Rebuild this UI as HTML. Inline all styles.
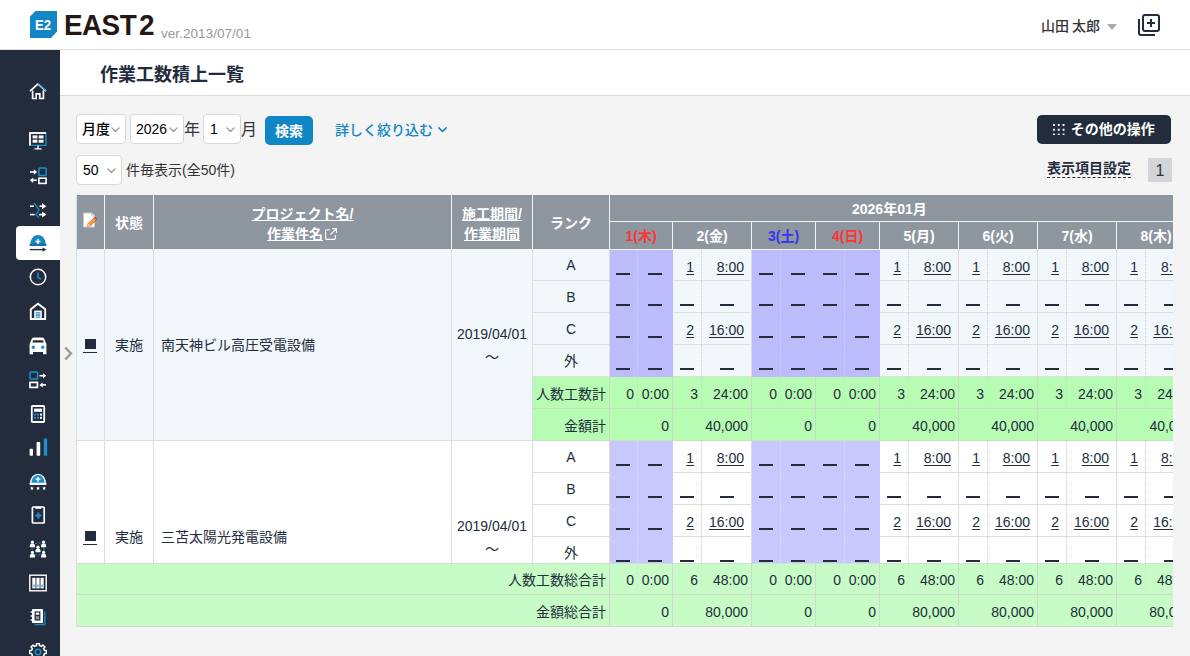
<!DOCTYPE html>
<html lang="ja"><head><meta charset="utf-8"><title>作業工数積上一覧</title>
<style>
*{box-sizing:border-box;margin:0;padding:0}
html,body{width:1190px;height:656px;overflow:hidden;background:#f4f4f4;font-family:"Liberation Sans","Noto Sans CJK JP",sans-serif;font-size:14px;color:#222c3c}
.abs{position:absolute}
#hdr{position:absolute;left:0;top:0;width:1190px;height:50px;background:#fff;border-bottom:1px solid #dcdcdc}
#side{position:absolute;left:0;top:50px;width:60px;height:606px;background:#222c3c}
#title{position:absolute;left:60px;top:50px;width:1130px;height:46px;background:#fff;border-bottom:1px solid #dcdcdc}
#title h1{position:absolute;left:40px;top:11px;font-size:18px;line-height:28px;font-weight:700;color:#222c3c}
.sel{position:absolute;height:30px;background:#fff;border:1px solid #d9d9d9;border-radius:4px;font-size:14px;line-height:28px;color:#000;padding-left:5px;font-weight:500}
.sel svg{position:absolute;right:5.5px;top:11.5px}
.lbl{position:absolute;font-size:16px;line-height:30px;color:#333}
.btn{position:absolute;border-radius:4px;color:#fff;font-weight:700;font-size:14px;text-align:center}
#tw{position:absolute;left:76px;top:195px;width:1097px;height:432px;overflow:hidden;background:#fff;border-left:1px solid #ddd}
table{border-collapse:separate;border-spacing:0;table-layout:fixed;width:1119px;position:absolute;left:0;top:0}
td,th{height:32px;border-right:1px solid #ddd;border-bottom:1px solid #ddd;font-weight:400;font-size:14px;line-height:20px;white-space:nowrap;overflow:hidden;vertical-align:middle;text-align:center;color:#222c3c}
th{background:#8e96a0;color:#fff;font-weight:700;height:27px;border-right:1px solid #f4f4f4;border-bottom:1px solid #f4f4f4}
th a,th u{color:#fff;text-decoration:underline}
td.a{border-right:1px dotted #ccc;padding:0}
td.p{background:#c8c8fc;border-right-color:#c8c8fc;border-bottom-color:#c8c8fc}
td.p.a{border-right:1px dotted #dedefc}
tr.h td{background:#f1f7fa}
tr.h td.p{background:#bcbcfc;border-right-color:#bcbcfc;border-bottom-color:#bcbcfc}
tr.h td.p.a{border-right:1px dotted #d0d0fc}
td.g, tr.h td.g{background:#b6fcb2;border-right:1px dotted #c6e2c3;border-bottom-color:#c6e2c3;text-align:right;padding-right:3px;padding-top:2px}
td.ge, tr.h td.ge{border-right:1px solid #c6dcc3}
td.r{text-align:right;padding-right:3px;padding-top:2px}
td.d{text-align:right;padding:2px 7px 0 0}
td.s.r,td.s.d{padding-top:3px}
td u{text-decoration:underline;text-underline-offset:2px}
td.l{text-align:left;padding-left:7px}
td.s{height:31px}
.dash{display:inline-block;width:14px;height:2px;background:#222c3c;vertical-align:-4.5px}
#foot{position:absolute;left:0;top:368px;width:1119px}
#foot td{background:#c8fcc6;padding-top:2px;border-right:1px dotted #d2e6ce;border-bottom-color:#cfdccc;text-align:right;padding-right:3px;height:32px}
#foot td.ge{border-right:1px solid #cfdccc}
#foot tr:first-child td{border-top:1px solid #cfe0cc;height:32px}
</style></head><body>
<div id="hdr">
<svg class="abs" style="left:30px;top:11px" width="27" height="27" viewBox="0 0 27 27"><path d="M5.5 0H27V20.5L21 27H0V5.5z" fill="#1486c6"/><text x="5" y="19" font-family="Liberation Sans, sans-serif" font-weight="700" font-size="14" fill="#fff" textLength="16" lengthAdjust="spacingAndGlyphs">E2</text></svg>
<div class="abs" id="east" style="left:63.5px;top:7.6px;font-size:30.3px;line-height:34px;font-weight:700;color:#231815;letter-spacing:-.6px;transform:scaleX(.92);transform-origin:0 0;white-space:nowrap">EAST<span style="margin-left:3px">2</span></div>
<div class="abs" style="left:161px;top:25px;font-size:13.6px;line-height:18px;color:#999">ver.2013/07/01</div>
<div class="abs" style="left:1041px;top:16px;font-size:14px;line-height:20px;color:#333;font-weight:500;word-spacing:-1px">山田 太郎</div>
<svg class="abs" style="left:1107px;top:23.5px" width="10" height="6" viewBox="0 0 12 7"><path d="M0 0h12L6 7z" fill="#aaa"/></svg>
<svg class="abs" style="left:1137px;top:13px" width="24" height="24" viewBox="0 0 24 24"><rect x="6" y="2" width="16" height="16" rx="2" fill="none" stroke="#222c3c" stroke-width="2"/><path d="M2 6v14a2 2 0 0 0 2 2h14" fill="none" stroke="#222c3c" stroke-width="2"/><path d="M14 6v8M10 10h8" stroke="#222c3c" stroke-width="2"/></svg>
</div>
<div id="side"><div class="abs" style="left:16px;top:176px;width:44px;height:34px;background:#fff;border-radius:4px 0 0 4px"></div>
<svg class="abs" style="left:29px;top:32px" width="18" height="18" viewBox="0 0 18 18"><path d="M1 9.2L9 1.8l8 7.4" fill="none" stroke="#fff" stroke-width="1.7" stroke-linejoin="miter"/><path d="M9 1.2l8.3 7.6" fill="none" stroke="#1b8fd0" stroke-width="1.2"/><path d="M3.6 8.5v8h3.6v-4.6h3.6v4.6h3.6v-8" fill="none" stroke="#fff" stroke-width="1.7"/></svg>
<svg class="abs" style="left:29px;top:82px" width="18" height="18" viewBox="0 0 18 18"><path d="M1 13.4V1h16" fill="none" stroke="#fff" stroke-width="1.4"/><path d="M17 .4v13H.4" fill="none" stroke="#1b8fd0" stroke-width="1.3"/><path d="M1 13.4V1h16" fill="none" stroke="#fff" stroke-width="1.4"/><g fill="#fff"><rect x="3.6" y="3.4" width="4.8" height="3"/><rect x="9.7" y="3.4" width="4.8" height="3"/><rect x="3.6" y="7.7" width="4.8" height="3"/><rect x="9.7" y="7.7" width="4.8" height="3"/></g><path d="M9 13.5v3M5.4 16.9h7.2" stroke="#fff" stroke-width="1.4"/></svg>
<svg class="abs" style="left:29px;top:117px" width="18" height="18" viewBox="0 0 18 18"><g stroke="#fff" stroke-width="1.6" fill="none"><path d="M1 5h4.4"/><path d="M3.4 13.2h4.4"/></g><path d="M4.8 2.3L8.2 5 4.8 7.7z" fill="#fff"/><path d="M4.2 10.5L.8 13.2l3.400 2.700z" fill="#fff"/><rect x="9.900" y="1" width="7.200" height="7.600" rx=".800" fill="none" stroke="#1b8fd0" stroke-width="1.500"/><rect x="9.900" y="11.200" width="7.200" height="5.200" fill="none" stroke="#fff" stroke-width="1.600"/></svg>
<svg class="abs" style="left:29px;top:150.5px" width="18" height="18" viewBox="0 0 18 18"><g fill="none" stroke-width="1.600"><path d="M1 5.200h4" stroke="#fff"/><path d="M1 13.600h4.600" stroke="#fff"/><path d="M5 1.800l5 7-3 4.600 2.800 3.400" stroke="#1b8fd0" stroke-width="1.300"/><path d="M10.500 5.200h3.500" stroke="#fff"/><path d="M10 13.600h4" stroke="#fff"/></g><path d="M13 2.200L17.400 5.200l-4.400 3z" fill="#fff"/><path d="M13 10.600l4.400 3-4.400 3z" fill="#fff"/></svg>
<svg class="abs" style="left:29px;top:184px" width="18" height="18" viewBox="0 0 18 18"><path d="M1.300 10.800C1.300 5 4.600 1 9 1s7.700 4 7.700 9.800z" fill="#1785c4"/><rect x=".400" y="9.800" width="17.200" height="2.200" rx="1.100" fill="#1272ab"/><path d="M9 5v5M6.500 7.500h5" stroke="#fff" stroke-width="1.600"/><path d="M.800 15.600h14" stroke="#222c3c" stroke-width="1.300"/><path d="M13.600 13.400l3.800 2.200-3.800 2.200z" fill="#222c3c"/></svg>
<svg class="abs" style="left:29px;top:218px" width="18" height="18" viewBox="0 0 18 18"><circle cx="9" cy="9" r="7.7" fill="none" stroke="#fff" stroke-width="1.5"/><path d="M9 4.4V9.4l3 2" fill="none" stroke="#1b8fd0" stroke-width="1.5"/></svg>
<svg class="abs" style="left:29px;top:252px" width="18" height="18" viewBox="0 0 18 18"><path d="M1.800 17V7.200L9 1.800l7.200 5.400V17z" fill="none" stroke="#fff" stroke-width="1.900"/><rect x="5.200" y="8.600" width="7.600" height="8.800" fill="#fff"/><path d="M6.600 10.800h4.800M6.600 13h4.800M6.600 15.200h4.800" stroke="#1b8fd0" stroke-width="1.300"/></svg>
<svg class="abs" style="left:29px;top:286.5px" width="18" height="18" viewBox="0 0 18 18"><path d="M2.800 1.800Q3.400.5 5 .5h8q1.600 0 2.200 1.300L17.400 7v10.300H14v-2.300H4v2.300H.600V7z" fill="#fff"/><path d="M4.200 3.300h9.600l1 2.300H3.200z" fill="#222c3c"/><circle cx="4.300" cy="10.200" r="1.700" fill="#1b8fd0"/><circle cx="13.700" cy="10.200" r="1.700" fill="#1b8fd0"/></svg>
<svg class="abs" style="left:29px;top:321px" width="18" height="18" viewBox="0 0 18 18"><rect x="1" y="1" width="7.6" height="7" rx=".8" fill="none" stroke="#1b8fd0" stroke-width="1.5"/><rect x="1" y="11.4" width="7.4" height="5" fill="none" stroke="#fff" stroke-width="1.7"/><path d="M10.5 4.7h4" stroke="#fff" stroke-width="1.6"/><path d="M14 2.2l3.2 2.5L14 7.2z" fill="#fff"/><path d="M13 13.9h4" stroke="#fff" stroke-width="1.6"/><path d="M13.6 11.4l-3.2 2.5 3.2 2.5z" fill="#fff"/></svg>
<svg class="abs" style="left:29px;top:354.5px" width="18" height="18" viewBox="0 0 18 18"><rect x="2.800" y="1" width="12.400" height="16" rx=".800" fill="none" stroke="#fff" stroke-width="1.800"/><rect x="5" y="3.6" width="8" height="3.2" fill="#fff"/><g fill="#1b8fd0"><rect x="5" y="8.6" width="2" height="2"/><rect x="8" y="8.6" width="2" height="2"/><rect x="5" y="11.8" width="2" height="2"/><rect x="8" y="11.8" width="2" height="2"/></g><g fill="#fff"><rect x="11" y="8.6" width="2" height="2"/><rect x="11" y="11.8" width="2" height="2"/></g></svg>
<svg class="abs" style="left:28.5px;top:388px" width="19" height="18" viewBox="0 0 19 18"><rect x=".600" y="10.800" width="3.400" height="7" rx=".800" fill="#fff"/><rect x="7.600" y="4" width="3.600" height="13.800" rx=".800" fill="#fff"/><rect x="14.800" y=".400" width="3.400" height="17.400" rx=".600" fill="#1b8fd0"/></svg>
<svg class="abs" style="left:29px;top:423px" width="18" height="18" viewBox="0 0 18 18"><path d="M1.700 10.600C1.700 5 4.800 1.400 9 1.400s7.300 3.600 7.300 9.200z" fill="#1b8fd0" stroke="#fff" stroke-width="1.400"/><rect x=".300" y="9.700" width="17.400" height="2.200" rx="1.100" fill="#fff"/><path d="M9 3.900v4.800M6.600 6.300h4.800" stroke="#fff" stroke-width="1.500"/><g fill="#fff"><polygon points="2.90,13.20 3.46,14.53 4.90,14.65 3.80,15.59 4.13,17.00 2.90,16.25 1.67,17.00 2.00,15.59 0.90,14.65 2.34,14.53"/><polygon points="9.00,13.20 9.56,14.53 11.00,14.65 9.90,15.59 10.23,17.00 9.00,16.25 7.77,17.00 8.10,15.59 7.00,14.65 8.44,14.53"/><polygon points="15.10,13.20 15.66,14.53 17.10,14.65 16.00,15.59 16.33,17.00 15.10,16.25 13.87,17.00 14.20,15.59 13.10,14.65 14.54,14.53"/></g></svg>
<svg class="abs" style="left:29px;top:456px" width="18" height="18" viewBox="0 0 18 18"><rect x="3.400" y="1" width="11.800" height="16" rx=".800" fill="none" stroke="#fff" stroke-width="1.700"/><path d="M6.300 1.700h6" stroke="#fff" stroke-width="2.200"/><path d="M9.300 6.600v5.800M6.400 9.500h5.800" stroke="#1b8fd0" stroke-width="2"/></svg>
<svg class="abs" style="left:29px;top:490px" width="18" height="18" viewBox="0 0 18 18"><circle cx="9" cy="9" r="6" fill="none" stroke="#1b8fd0" stroke-width="1" stroke-dasharray="2 1.5"/><circle cx="3.4" cy="2.2" r="1.6" fill="#fff"/><path d="M0.7999999999999998 7.2v-1.4a2.6 2.2 0 0 1 5.2 0v1.4z" fill="#fff"/><circle cx="14.6" cy="2.2" r="1.6" fill="#fff"/><path d="M12.0 7.2v-1.4a2.6 2.2 0 0 1 5.2 0v1.4z" fill="#fff"/><circle cx="9" cy="7.2" r="1.6" fill="#fff"/><path d="M6.4 12.2v-1.4a2.6 2.2 0 0 1 5.2 0v1.4z" fill="#fff"/><circle cx="3.4" cy="12.4" r="1.6" fill="#fff"/><path d="M0.7999999999999998 17.4v-1.4a2.6 2.2 0 0 1 5.2 0v1.4z" fill="#fff"/><circle cx="14.6" cy="12.4" r="1.6" fill="#fff"/><path d="M12.0 17.4v-1.4a2.6 2.2 0 0 1 5.2 0v1.4z" fill="#fff"/></svg>
<svg class="abs" style="left:29px;top:524px" width="18" height="18" viewBox="0 0 18 18"><rect x=".800" y="1.200" width="16.400" height="15.600" fill="none" stroke="#fff" stroke-width="1.400"/><g fill="#fff"><rect x="3.300" y="3.800" width="3.200" height="10.600"/><rect x="7.400" y="3.800" width="3.200" height="10.600"/><rect x="11.500" y="3.800" width="3.200" height="10.600"/></g><g fill="#1b8fd0"><rect x="4.4" y="10.6" width="1.2" height="2.2"/><rect x="8.4" y="10.6" width="1.2" height="2.2"/><rect x="12.4" y="10.6" width="1.2" height="2.2"/></g></svg>
<svg class="abs" style="left:29px;top:558px" width="18" height="18" viewBox="0 0 18 18"><path d="M5.400 16.600h10.400V3.600" fill="none" stroke="#1a86b8" stroke-width="1.500"/><rect x="3" y="1" width="11" height="14" rx=".8" fill="#fff"/><rect x="5.6" y="3.4" width="5.8" height="9.2" fill="#222c3c"/><rect x="6.8" y="4.6" width="3.4" height="2.2" fill="#fff"/><rect x="6.8" y="8.2" width="3.4" height="3.2" fill="#8b95a3"/><path d="M1.6 4h2.4M1.6 8h2.4M1.6 12h2.4" stroke="#fff" stroke-width="1.3"/></svg>
<svg class="abs" style="left:29px;top:592.5px" width="18" height="18" viewBox="0 0 18 18"><path d="M7.55 0.52L10.45 0.52L10.44 2.56L12.54 3.43L13.96 1.98L16.02 4.04L14.57 5.46L15.44 7.56L17.48 7.55L17.48 10.45L15.44 10.44L14.57 12.54L16.02 13.96L13.96 16.02L12.54 14.57L10.44 15.44L10.45 17.48L7.55 17.48L7.56 15.44L5.46 14.57L4.04 16.02L1.98 13.96L3.43 12.54L2.56 10.44L0.52 10.45L0.52 7.55L2.56 7.56L3.43 5.46L1.98 4.04L4.04 1.98L5.46 3.43L7.56 2.56z" fill="none" stroke="#fff" stroke-width="1.5" stroke-linejoin="round"/><circle cx="9" cy="9" r="2.8" fill="none" stroke="#1b8fd0" stroke-width="1.6"/></svg></div>
<div id="title"><h1>作業工数積上一覧</h1></div>
<svg class="abs" style="left:63px;top:346px" width="10" height="15" viewBox="0 0 10 15"><path d="M2.2 1.5l5.8 6-5.8 6" fill="none" stroke="#999" stroke-width="2.4"/></svg>

<div class="sel" style="left:76px;top:114px;width:50px">月度<svg width="9" height="5.4" viewBox="0 0 10 6"><path d="M1 1l4 4 4-4" fill="none" stroke="#999" stroke-width="1.5" stroke-linecap="round" stroke-linejoin="round"/></svg></div>
<div class="sel" style="left:130px;top:114px;width:54px">2026<svg width="9" height="5.4" viewBox="0 0 10 6"><path d="M1 1l4 4 4-4" fill="none" stroke="#999" stroke-width="1.5" stroke-linecap="round" stroke-linejoin="round"/></svg></div>
<div class="lbl" style="left:184px;top:115px">年</div>
<div class="sel" style="left:203px;top:114px;width:38px;padding-left:6px">1<svg width="9" height="5.4" viewBox="0 0 10 6"><path d="M1 1l4 4 4-4" fill="none" stroke="#999" stroke-width="1.5" stroke-linecap="round" stroke-linejoin="round"/></svg></div>
<div class="lbl" style="left:241px;top:115px">月</div>
<div class="btn" style="left:265px;top:116px;width:48px;height:29px;line-height:31px;background:#0f86c5;border-radius:5px">検索</div>
<div class="abs" style="left:335px;top:119.5px;font-size:14px;line-height:20px;font-weight:500;color:#1285c4">詳しく絞り込む <svg width="9" height="5.4" viewBox="0 0 10 6" style="vertical-align:2px;margin-left:1px"><path d="M1 1l4 4 4-4" fill="none" stroke="#1285c4" stroke-width="1.7" stroke-linecap="round" stroke-linejoin="round"/></svg></div>
<div class="btn" style="left:1037px;top:115px;width:134px;height:29px;line-height:29.5px;background:#222c3c;border-radius:5px"><svg width="11.5" height="11.5" viewBox="0 0 12 12" style="vertical-align:-1px;margin-right:6px"><g fill="#fff"><rect x="0" y="0" width="2" height="2"/><rect x="5" y="0" width="2" height="2"/><rect x="10" y="0" width="2" height="2"/><rect x="0" y="5" width="2" height="2"/><rect x="5" y="5" width="2" height="2"/><rect x="10" y="5" width="2" height="2"/><rect x="0" y="10" width="2" height="2"/><rect x="5" y="10" width="2" height="2"/><rect x="10" y="10" width="2" height="2"/></g></svg>その他の操作</div>

<div class="sel" style="left:76px;top:155px;width:46px;padding-left:6px">50<svg width="9" height="5.4" viewBox="0 0 10 6"><path d="M1 1l4 4 4-4" fill="none" stroke="#999" stroke-width="1.5" stroke-linecap="round" stroke-linejoin="round"/></svg></div>
<div class="abs" style="left:126px;top:160px;font-size:14px;line-height:20px;color:#333">件毎表示(全50件)</div>
<div class="abs" style="left:1047px;top:160px;font-size:14px;line-height:17px;height:18px;font-weight:700;color:#222c3c;border-bottom:1px dashed #222c3c">表示項目設定</div>
<div class="abs" style="left:1148px;top:158px;width:24px;height:24px;background:#d3d5d8;font-size:16px;line-height:25px;text-align:center;color:#333">1</div>

<div id="tw"><table><colgroup><col style="width:28px"><col style="width:49px"><col style="width:298px"><col style="width:81px"><col style="width:77px"><col style="width:28px"><col style="width:35px"><col style="width:29px"><col style="width:50px"><col style="width:29px"><col style="width:35px"><col style="width:29px"><col style="width:35px"><col style="width:29px"><col style="width:50px"><col style="width:29px"><col style="width:50px"><col style="width:29px"><col style="width:50px"><col style="width:29px"><col style="width:50px"></colgroup><tr><th rowspan="2" style="padding:0"><svg width="16" height="17" viewBox="0 0 16 17" style="vertical-align:middle;position:relative;left:-1px;top:-3px"><path d="M1.5 1h8l3 3v11h-11z" fill="#fff" stroke="#c8ccd2" stroke-width="1"/><path d="M9.5 1v3h3" fill="#e8eaee" stroke="#c8ccd2" stroke-width=".8"/><path d="M5 15l1-3.2 6.5-6.5 2.2 2.2-6.5 6.5z" fill="#f6a13a" stroke="#c9582a" stroke-width=".7"/><path d="M5 15l1-3.2 2.2 2.2z" fill="#f6d9a0"/><path d="M12.5 5.3l2.2 2.2" stroke="#d0432a" stroke-width="1.4"/></svg></th><th rowspan="2" style="padding-top:2px">状態</th><th rowspan="2" style="padding-top:3px"><u>プロジェクト名/</u><br><u>作業件名</u><svg width="14" height="14" viewBox="0 0 13 13" style="vertical-align:-2.5px;margin-left:1px"><path d="M5.5 2.5h-3a1 1 0 0 0-1 1v7a1 1 0 0 0 1 1h7a1 1 0 0 0 1-1v-3M7.5 1.5h4v4M11.5 1.5l-5.5 5.5" fill="none" stroke="#fff" stroke-width="1"/></svg></th><th rowspan="2" style="padding-top:3px"><u>施工期間/</u><br><u>作業期間</u></th><th rowspan="2" style="padding-top:2px">ランク</th><th colspan="16" style="text-align:left;padding-left:242px;padding-top:1px">2026年01月</th></tr><tr><th colspan="2" style="color:#ff3333;height:28px;padding-top:1px">1(木)</th><th colspan="2" style="color:#fff;height:28px;padding-top:1px">2(金)</th><th colspan="2" style="color:#3333ee;height:28px;padding-top:1px">3(土)</th><th colspan="2" style="color:#ff3333;height:28px;padding-top:1px">4(日)</th><th colspan="2" style="color:#fff;height:28px;padding-top:1px">5(月)</th><th colspan="2" style="color:#fff;height:28px;padding-top:1px">6(火)</th><th colspan="2" style="color:#fff;height:28px;padding-top:1px">7(水)</th><th colspan="2" style="color:#fff;height:28px;padding-top:1px">8(木)</th></tr>
<tr class="h"><td rowspan="6" style="padding:0"><span style="display:inline-block;width:14px;height:14px;border-bottom:1px solid #222c3c;vertical-align:-3px;margin-right:1px"><span style="display:block;width:11px;height:10px;margin:0 auto;background:#222c3c"></span></span></td><td rowspan="6">実施</td><td rowspan="6" class="l">南天神ビル高圧受電設備</td><td rowspan="6" style="padding-top:2px;line-height:23px">2019/04/01<br>～</td><td class="s">A</td><td class="s a p" style="padding-right:2px"><span class="dash"></span></td><td class="s p"><span class="dash"></span></td><td class="s a d"><u>1</u></td><td class="s r" style="padding-right:7px"><u>8:00</u></td><td class="s a p"><span class="dash"></span></td><td class="s p"><span class="dash"></span></td><td class="s a p"><span class="dash"></span></td><td class="s p"><span class="dash"></span></td><td class="s a d"><u>1</u></td><td class="s r" style="padding-right:7px"><u>8:00</u></td><td class="s a d"><u>1</u></td><td class="s r" style="padding-right:7px"><u>8:00</u></td><td class="s a d"><u>1</u></td><td class="s r" style="padding-right:7px"><u>8:00</u></td><td class="s a d"><u>1</u></td><td class="s r" style="padding-right:7px"><u>8:00</u></td></tr>
<tr class="h"><td>B</td><td class="a p" style="padding-right:2px"><span class="dash"></span></td><td class="p"><span class="dash"></span></td><td class="a"><span class="dash"></span></td><td class=""><span class="dash"></span></td><td class="a p"><span class="dash"></span></td><td class="p"><span class="dash"></span></td><td class="a p"><span class="dash"></span></td><td class="p"><span class="dash"></span></td><td class="a"><span class="dash"></span></td><td class=""><span class="dash"></span></td><td class="a"><span class="dash"></span></td><td class=""><span class="dash"></span></td><td class="a"><span class="dash"></span></td><td class=""><span class="dash"></span></td><td class="a"><span class="dash"></span></td><td class=""><span class="dash"></span></td></tr>
<tr class="h"><td>C</td><td class="a p" style="padding-right:2px"><span class="dash"></span></td><td class="p"><span class="dash"></span></td><td class="a d"><u>2</u></td><td class="r" style="padding-right:7px"><u>16:00</u></td><td class="a p"><span class="dash"></span></td><td class="p"><span class="dash"></span></td><td class="a p"><span class="dash"></span></td><td class="p"><span class="dash"></span></td><td class="a d"><u>2</u></td><td class="r" style="padding-right:7px"><u>16:00</u></td><td class="a d"><u>2</u></td><td class="r" style="padding-right:7px"><u>16:00</u></td><td class="a d"><u>2</u></td><td class="r" style="padding-right:7px"><u>16:00</u></td><td class="a d"><u>2</u></td><td class="r" style="padding-right:7px"><u>16:00</u></td></tr>
<tr class="h"><td>外</td><td class="a p" style="padding-right:2px"><span class="dash"></span></td><td class="p"><span class="dash"></span></td><td class="a"><span class="dash"></span></td><td class=""><span class="dash"></span></td><td class="a p"><span class="dash"></span></td><td class="p"><span class="dash"></span></td><td class="a p"><span class="dash"></span></td><td class="p"><span class="dash"></span></td><td class="a"><span class="dash"></span></td><td class=""><span class="dash"></span></td><td class="a"><span class="dash"></span></td><td class=""><span class="dash"></span></td><td class="a"><span class="dash"></span></td><td class=""><span class="dash"></span></td><td class="a"><span class="dash"></span></td><td class=""><span class="dash"></span></td></tr>
<tr class="h"><td class="g ge">人数工数計</td><td class="g">0</td><td class="g ge">0:00</td><td class="g">3</td><td class="g ge">24:00</td><td class="g">0</td><td class="g ge">0:00</td><td class="g">0</td><td class="g ge">0:00</td><td class="g">3</td><td class="g ge">24:00</td><td class="g">3</td><td class="g ge">24:00</td><td class="g">3</td><td class="g ge">24:00</td><td class="g">3</td><td class="g ge">24:00</td></tr>
<tr class="h"><td class="g ge">金額計</td><td class="g ge" colspan="2">0</td><td class="g ge" colspan="2">40,000</td><td class="g ge" colspan="2">0</td><td class="g ge" colspan="2">0</td><td class="g ge" colspan="2">40,000</td><td class="g ge" colspan="2">40,000</td><td class="g ge" colspan="2">40,000</td><td class="g ge" colspan="2">40,000</td></tr>
<tr><td rowspan="6" style="padding:0"><span style="display:inline-block;width:14px;height:14px;border-bottom:1px solid #222c3c;vertical-align:-3px;margin-right:1px"><span style="display:block;width:11px;height:10px;margin:0 auto;background:#222c3c"></span></span></td><td rowspan="6">実施</td><td rowspan="6" class="l">三苫太陽光発電設備</td><td rowspan="6" style="padding-top:2px;line-height:23px">2019/04/01<br>～</td><td>A</td><td class="a p" style="padding-right:2px"><span class="dash"></span></td><td class="p"><span class="dash"></span></td><td class="a d"><u>1</u></td><td class="r" style="padding-right:7px"><u>8:00</u></td><td class="a p"><span class="dash"></span></td><td class="p"><span class="dash"></span></td><td class="a p"><span class="dash"></span></td><td class="p"><span class="dash"></span></td><td class="a d"><u>1</u></td><td class="r" style="padding-right:7px"><u>8:00</u></td><td class="a d"><u>1</u></td><td class="r" style="padding-right:7px"><u>8:00</u></td><td class="a d"><u>1</u></td><td class="r" style="padding-right:7px"><u>8:00</u></td><td class="a d"><u>1</u></td><td class="r" style="padding-right:7px"><u>8:00</u></td></tr>
<tr><td>B</td><td class="a p" style="padding-right:2px"><span class="dash"></span></td><td class="p"><span class="dash"></span></td><td class="a"><span class="dash"></span></td><td class=""><span class="dash"></span></td><td class="a p"><span class="dash"></span></td><td class="p"><span class="dash"></span></td><td class="a p"><span class="dash"></span></td><td class="p"><span class="dash"></span></td><td class="a"><span class="dash"></span></td><td class=""><span class="dash"></span></td><td class="a"><span class="dash"></span></td><td class=""><span class="dash"></span></td><td class="a"><span class="dash"></span></td><td class=""><span class="dash"></span></td><td class="a"><span class="dash"></span></td><td class=""><span class="dash"></span></td></tr>
<tr><td>C</td><td class="a p" style="padding-right:2px"><span class="dash"></span></td><td class="p"><span class="dash"></span></td><td class="a d"><u>2</u></td><td class="r" style="padding-right:7px"><u>16:00</u></td><td class="a p"><span class="dash"></span></td><td class="p"><span class="dash"></span></td><td class="a p"><span class="dash"></span></td><td class="p"><span class="dash"></span></td><td class="a d"><u>2</u></td><td class="r" style="padding-right:7px"><u>16:00</u></td><td class="a d"><u>2</u></td><td class="r" style="padding-right:7px"><u>16:00</u></td><td class="a d"><u>2</u></td><td class="r" style="padding-right:7px"><u>16:00</u></td><td class="a d"><u>2</u></td><td class="r" style="padding-right:7px"><u>16:00</u></td></tr>
<tr><td>外</td><td class="a p" style="padding-right:2px"><span class="dash"></span></td><td class="p"><span class="dash"></span></td><td class="a"><span class="dash"></span></td><td class=""><span class="dash"></span></td><td class="a p"><span class="dash"></span></td><td class="p"><span class="dash"></span></td><td class="a p"><span class="dash"></span></td><td class="p"><span class="dash"></span></td><td class="a"><span class="dash"></span></td><td class=""><span class="dash"></span></td><td class="a"><span class="dash"></span></td><td class=""><span class="dash"></span></td><td class="a"><span class="dash"></span></td><td class=""><span class="dash"></span></td><td class="a"><span class="dash"></span></td><td class=""><span class="dash"></span></td></tr>
<tr><td class="g ge">人数工数計</td><td class="g">0</td><td class="g ge">0:00</td><td class="g">3</td><td class="g ge">24:00</td><td class="g">0</td><td class="g ge">0:00</td><td class="g">0</td><td class="g ge">0:00</td><td class="g">3</td><td class="g ge">24:00</td><td class="g">3</td><td class="g ge">24:00</td><td class="g">3</td><td class="g ge">24:00</td><td class="g">3</td><td class="g ge">24:00</td></tr>
<tr><td class="g ge">金額計</td><td class="g ge" colspan="2">0</td><td class="g ge" colspan="2">40,000</td><td class="g ge" colspan="2">0</td><td class="g ge" colspan="2">0</td><td class="g ge" colspan="2">40,000</td><td class="g ge" colspan="2">40,000</td><td class="g ge" colspan="2">40,000</td><td class="g ge" colspan="2">40,000</td></tr></table><table id="foot"><colgroup><col style="width:28px"><col style="width:49px"><col style="width:298px"><col style="width:81px"><col style="width:77px"><col style="width:28px"><col style="width:35px"><col style="width:29px"><col style="width:50px"><col style="width:29px"><col style="width:35px"><col style="width:29px"><col style="width:35px"><col style="width:29px"><col style="width:50px"><col style="width:29px"><col style="width:50px"><col style="width:29px"><col style="width:50px"><col style="width:29px"><col style="width:50px"></colgroup><tr><td colspan="5" class="ge">人数工数総合計</td><td class="f">0</td><td class="f ge">0:00</td><td class="f">6</td><td class="f ge">48:00</td><td class="f">0</td><td class="f ge">0:00</td><td class="f">0</td><td class="f ge">0:00</td><td class="f">6</td><td class="f ge">48:00</td><td class="f">6</td><td class="f ge">48:00</td><td class="f">6</td><td class="f ge">48:00</td><td class="f">6</td><td class="f ge">48:00</td></tr><tr><td colspan="5" class="ge">金額総合計</td><td class="f ge" colspan="2">0</td><td class="f ge" colspan="2">80,000</td><td class="f ge" colspan="2">0</td><td class="f ge" colspan="2">0</td><td class="f ge" colspan="2">80,000</td><td class="f ge" colspan="2">80,000</td><td class="f ge" colspan="2">80,000</td><td class="f ge" colspan="2">80,000</td></tr></table></div>
</body></html>
